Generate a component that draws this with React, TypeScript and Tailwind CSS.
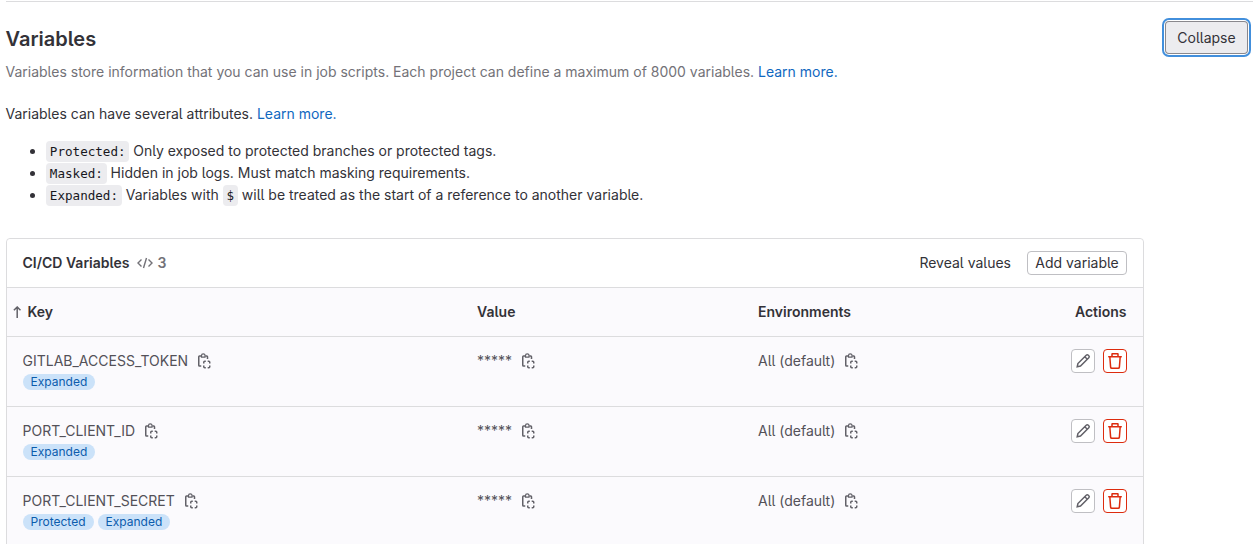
import type { ReactNode } from "react";

function CopyIcon() {
  return (
    <svg width="16" height="16" viewBox="0 0 16 16" fill="none" stroke="#626168" strokeWidth="1.5" className="shrink-0">
      <path d="M5.2 3H3.5a.75.75 0 0 0-.75.75v8.5a.75.75 0 0 0 .75.75h1.75M9.3 3h1.45a.75.75 0 0 1 .75.75V6" />
      <path d="M5.5 4.1V2.4a1.75 1.6 0 0 1 3.5 0v1.7z" strokeWidth="1.2" />
      <path d="M7.75 10.4V9.25a1 1 0 0 1 1-1H9.8M11.7 8.25h1.05a1 1 0 0 1 1 1v1.15M13.75 12.6v1.15a1 1 0 0 1-1 1H11.7M9.8 14.75H8.75a1 1 0 0 1-1-1V12.6" />
    </svg>
  );
}

function PencilIcon() {
  return (
    <svg width="16" height="16" viewBox="0 0 16 16" fill="none" stroke="#626168" strokeWidth="1.5">
      <path d="M11.2 2.2a1.5 1.5 0 0 1 2.1 0l.5.5a1.5 1.5 0 0 1 0 2.1l-8.3 8.3-3.3.7.7-3.3zM9.8 3.7l2.5 2.5" />
    </svg>
  );
}

function TrashIcon() {
  return (
    <svg width="16" height="16" viewBox="0 0 16 16" fill="#dd2b0e" fillRule="evenodd">
      <path d="M5.75 3V1.5h4.5V3h-4.5zm-1.5 0V1a1 1 0 0 1 1-1h5.5a1 1 0 0 1 1 1v2h2.5a.75.75 0 0 1 0 1.5h-.365l-.743 9.653A2 2 0 0 1 11.148 16H4.852a2 2 0 0 1-1.994-1.847L2.115 4.5H1.75a.75.75 0 0 1 0-1.5h2.5zm-.63 1.5h8.76l-.734 9.538a.5.5 0 0 1-.498.462H4.852a.5.5 0 0 1-.498-.462L3.62 4.5z" />
    </svg>
  );
}

function Code({ children }: { children: ReactNode }) {
  return (
    <code className="rounded bg-[#ececef] px-[3.8px] py-[3px] font-['DejaVu_Sans_Mono',monospace] text-[12.6px] leading-[15px] text-[#18171d]">
      {children}
    </code>
  );
}

const grid = "grid grid-cols-[454.5px_281px_1fr_80px]";

const rows = [
  { key: "GITLAB_ACCESS_TOKEN", tags: ["Expanded"] },
  { key: "PORT_CLIENT_ID", tags: ["Expanded"] },
  { key: "PORT_CLIENT_SECRET", tags: ["Protected", "Expanded"] },
];

export default function App() {
  return (
    <div className="h-[544px] overflow-hidden bg-white pr-1 pl-1.5 font-['Inter',sans-serif] text-sm leading-5 text-[#333238] [font-feature-settings:'cv05']">
      <div className="mt-px border-t border-[#dcdcde]" />
      <header className="-ml-[0.5px] flex justify-between">
        <div>
          <h2 className="mt-[25px] text-xl leading-6 font-semibold">Variables</h2>
          <p className="mt-[11px] text-[#737278]">
            Variables store information that you can use in job scripts. Each project can define a maximum of 8000
            variables. <a className="text-[#1068bf]">Learn more.</a>
          </p>
        </div>
        <button className="mt-[20px] mr-[6px] h-[31px] w-[81px] rounded-[3px] bg-[#ececef] shadow-[0_0_0_1px_#89888d,0_0_0_2px_#fff,0_0_0_4px_#428fdc]">
          Collapse
        </button>
      </header>
      <p className="mt-[22px] -ml-[0.5px]">
        Variables can have several attributes. <a className="text-[#1068bf]">Learn more.</a>
      </p>
      <ul className="mt-4 list-disc pl-10 leading-[22px]">
        <li>
          <Code>Protected:</Code> Only exposed to protected branches or protected tags.
        </li>
        <li>
          <Code>Masked:</Code> Hidden in job logs. Must match masking requirements.
        </li>
        <li>
          <Code>Expanded:</Code> Variables with <Code>$</Code> will be treated as the start of a reference to another
          variable.
        </li>
      </ul>
      <section className="mt-8 w-[1138px] rounded border border-[#dcdcde] bg-[#fbfafd]">
        <div className="flex h-[49px] items-center rounded-t border-b border-[#dcdcde] bg-white pr-4 pl-[15.5px]">
          <h3 className="font-semibold">CI/CD Variables</h3>
          <span className="ml-2 flex items-center gap-1 font-semibold text-[#737278]">
            <svg width="16" height="16" viewBox="0 0 16 16" fill="none" stroke="#737278" strokeWidth="1.4">
              <path d="M4.5 4.5 1 8l3.5 3.5M11.5 4.5 15 8l-3.5 3.5M9.5 3 6.5 13" />
            </svg>
            3
          </span>
          <span className="mr-4 ml-auto">Reveal values</span>
          <button className="h-6 w-[100px] rounded border border-[#bfbfc3] bg-white">Add variable</button>
        </div>
        <div className={`${grid} h-[49px] items-center border-b border-[#dcdcde] pr-[16.5px] pl-[15.5px] font-semibold`}>
          <span className="-ml-[9.5px] flex items-center gap-[6.5px]">
            <svg width="8" height="12" viewBox="0 0 8 12" fill="none" stroke="#626168" strokeWidth="1.5">
              <path d="M4.2 12V1M.9 4.3 4.2 1l3.3 3.3" />
            </svg>
            Key
          </span>
          <span>Value</span>
          <span>Environments</span>
          <span className="text-right">Actions</span>
        </div>
        {rows.map((row) => (
          <div key={row.key} className={`${grid} h-[70px] border-b border-[#dcdcde] pt-3 pr-4 pl-[15.5px] text-[#535158]`}>
            <div>
              <div className="flex h-6 items-center gap-2">
                {row.key}
                <CopyIcon />
              </div>
              <div className="mt-px flex gap-1">
                {row.tags.map((tag) => (
                  <span key={tag} className="rounded-full bg-[#cbe2f9] px-2 text-xs leading-4 text-[#0b5cad]">
                    {tag}
                  </span>
                ))}
              </div>
            </div>
            <div className="flex h-6 items-center gap-2">
              *****
              <CopyIcon />
            </div>
            <div className="flex h-6 items-center gap-2">
              All (default)
              <CopyIcon />
            </div>
            <div className="flex justify-end gap-2">
              <button className="flex size-6 items-center justify-center rounded border border-[#bfbfc3] bg-white">
                <PencilIcon />
              </button>
              <button className="flex size-6 items-center justify-center rounded border border-[#dd2b0e] bg-white">
                <TrashIcon />
              </button>
            </div>
          </div>
        ))}
      </section>
    </div>
  );
}
